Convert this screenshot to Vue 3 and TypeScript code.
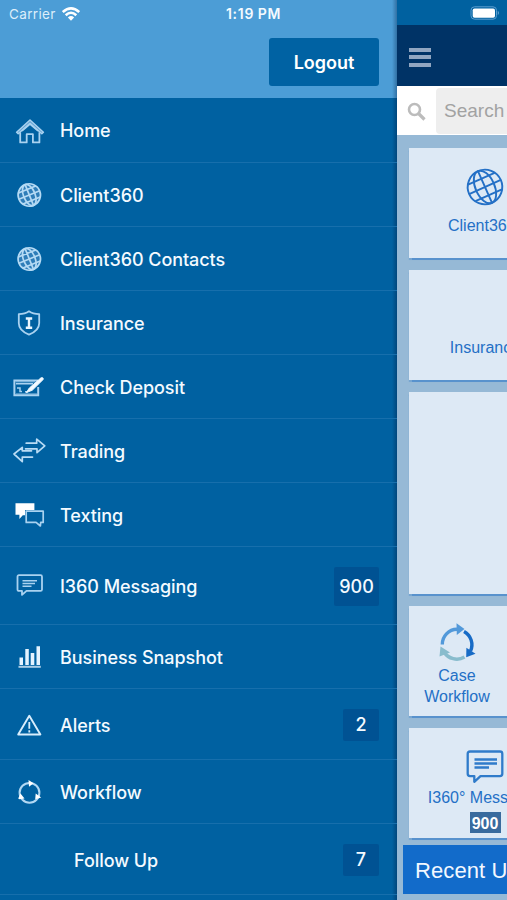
<script setup lang="ts">
interface MenuItem {
  label: string
  icon?: string
  badge?: string
  size?: string
}

const items: MenuItem[] = [
  { label: 'Home', icon: 'home', size: 'first' },
  { label: 'Client360', icon: 'globe' },
  { label: 'Client360 Contacts', icon: 'globe' },
  { label: 'Insurance', icon: 'shield' },
  { label: 'Check Deposit', icon: 'check' },
  { label: 'Trading', icon: 'trade' },
  { label: 'Texting', icon: 'chat' },
  { label: 'I360 Messaging', icon: 'message', badge: '900', size: 'tall' },
  { label: 'Business Snapshot', icon: 'bars' },
  { label: 'Alerts', icon: 'alert', badge: '2', size: 'medium' },
  { label: 'Workflow', icon: 'cycle' },
  { label: 'Follow Up', badge: '7', size: 'medium' },
]
</script>

<template>
  <div class="screen">
    <aside class="drawer">
      <header class="drawer-head">
        <div class="status">
          <span class="carrier">Carrier</span>
          <svg class="wifi" width="18" height="14" viewBox="0 0 18 14">
            <g fill="none" stroke="#fff" stroke-width="2.6">
              <path d="M0.8 5.1Q9-2.3 17.2 5.1" />
              <path d="M3.7 8.2Q9 3.3 14.3 8.2" />
            </g>
            <path d="M5.9 10.5Q9 7.7 12.1 10.5L9 13.7z" fill="#fff" />
          </svg>
          <span class="time">1:19 PM</span>
        </div>
        <button class="logout">Logout</button>
      </header>
      <nav>
        <div v-for="item in items" :key="item.label" class="row" :class="[item.size, { sub: !item.icon }]">
          <svg v-if="item.icon" class="icon" width="36" height="32" viewBox="0 0 36 32">
            <g v-if="item.icon === 'home'" fill="none" stroke="#a9d2f0" stroke-width="1.5" stroke-linejoin="round">
              <path d="M4.6 17.2L18 5l13.4 12.2-1.6 1.6L18 8.2 6.2 18.8z" fill="#5f9fd0" />
              <path d="M8.2 17.3V27.4h6.5v-8.2h6.2v8.2h6.5V17.3" stroke-width="1.8" />
              <path d="M10 16L18 9.2l8 6.8" />
            </g>
            <g v-else-if="item.icon === 'globe'" fill="none" stroke="#b4daf4" stroke-width="1.7" transform="rotate(-22 17.3 16)">
              <circle cx="17.3" cy="16" r="11.2" fill="#2e7db8" />
              <ellipse cx="17.3" cy="16" rx="5.8" ry="11.2" />
              <path d="M17.3 4.8v22.4M6.1 16h22.4M8 10h18.6M8 22h18.6" />
            </g>
            <g v-else-if="item.icon === 'shield'">
              <path d="M17 4.3C14 6.5 10.5 7.1 6.800 7.100v9.200c0 5.600 4.800 9.200 10.200 11.400 5.400-2.200 10.200-5.800 10.200-11.400V7.100C23.500 7.100 20 6.500 17 4.300z" fill="none" stroke="#a9d2f0" stroke-width="1.8" stroke-linejoin="round" />
              <path d="M13.8 11.5h6.400M13.800 20.700h6.400M17 11.500v9.200" fill="none" stroke="#eaf6ff" stroke-width="2.4" />
            </g>
            <g v-else-if="item.icon === 'check'" fill="none" stroke="#a9d2f0">
              <path d="M26 9.500H2.400v14.800h23.800V16" stroke-width="2" />
              <path d="M4 12.800h17M13 20.700h3" stroke-width="1.5" />
              <path d="M4 10.800h19M4 22.800h21" stroke-width="1.2" opacity=".6" />
              <path d="M5 17h3v3.500h2" stroke-width="1.5" />
              <path d="M14.300 21.600l3-4.600L29 6.800q2.300-.8 2.400 1.500L20.200 19.300z" fill="#f3faff" stroke="#f3faff" stroke-width=".9" />
            </g>
            <g v-else-if="item.icon === 'trade'" fill="none" stroke="#b9dcf5" stroke-width="1.7" stroke-linejoin="round" stroke-linecap="round">
              <path d="M14.200 8.200h10.500V4.200L32.800 10.800l-7.800 6.800v-3.800H13.500" />
              <path d="M19.500 15.800h-9.200v-3.500L2 19l8.300 7.600v-4.500h10.200" />
            </g>
            <g v-else-if="item.icon === 'chat'">
              <path d="M3.500 4.200h18.900v6.800H13v5.200h-2.200L7.400 20v-4.300H3.500z" fill="#fff" />
              <path d="M14.200 12.200h17v11.200h-2.500l-.3 3.600-4.300-3.600h-9.900z" fill="none" stroke="#a9d2f0" stroke-width="1.7" stroke-linejoin="round" />
            </g>
            <g v-else-if="item.icon === 'message'" fill="none" stroke="#a9d2f0" stroke-width="1.8" stroke-linejoin="round">
              <path d="M7 5.200h21.500q1.500 0 1.500 1.500v12.700q0 1.500-1.500 1.500H14.500l-4.500 4v-4H7q-1.500 0-1.500-1.500V6.700q0-1.500 1.500-1.500z" />
              <path d="M10.500 10.700h14.500M10.500 13.500h12.500M10.500 16.200h9" stroke-width="1.5" />
            </g>
            <g v-else-if="item.icon === 'bars'" fill="#e4f3ff">
              <path d="M7.500 16.500H11V24H7.500zM13.300 8h3.500v16h-3.500zM18.700 12h3.600v12h-3.600zM24.500 5.300H28V24h-3.500z" />
              <path d="M6.500 24.800h22.300v2H6.500z" opacity=".75" />
            </g>
            <g v-else-if="item.icon === 'alert'" fill="none" stroke="#d8edfc">
              <path d="M17.300 6.800L28.400 25.500H6.200z" stroke-width="1.9" stroke-linejoin="round" />
              <path d="M17.300 13v6.800M17.300 21.300v2.200" stroke-width="1.8" />
            </g>
            <g v-else>
              <circle cx="17.500" cy="16.800" r="9.900" fill="none" stroke="#b2d8f3" stroke-width="2" />
              <path d="M16.500 4l5 3.200-4.500 3.600zM6.200 22.400l2.300-4.800 4 4.800-5 .8zM29.200 21.500l-6 1.700.5-5.600z" fill="#fff" />
            </g>
          </svg>
          <span class="label">{{ item.label }}</span>
          <span v-if="item.badge" class="badge">{{ item.badge }}</span>
        </div>
      </nav>
    </aside>

    <main class="page">
      <div class="page-status">
        <svg width="30" height="14" viewBox="0 0 30 14">
          <rect x="1" y=".8" width="25.5" height="12.4" rx="3.5" fill="none" stroke="#5a9dcf" />
          <rect x="2.7" y="2.5" width="22.3" height="9.2" rx="1.8" fill="#fff" />
          <path d="M27.8 4.8q2 2.2 0 4.4z" fill="#78afd8" />
        </svg>
      </div>
      <div class="toolbar"><i /><i /><i /></div>
      <div class="search">
        <svg width="20" height="20" viewBox="0 0 20 20" fill="none" stroke="#bcbcbc">
          <circle cx="7.5" cy="7.5" r="5.5" stroke-width="2.6" />
          <path d="M11.5 11.5l6 6" stroke-width="3.2" />
        </svg>
        <span class="field">Search</span>
      </div>
      <section class="tiles">
        <div class="tile">
          <svg class="globe" width="40" height="40" viewBox="0 0 40 40" fill="none" stroke="#2470c6" stroke-width="1.9">
            <g transform="rotate(-24 20 20)">
              <circle cx="20" cy="20" r="17.3" />
              <ellipse cx="20" cy="20" rx="9.5" ry="17.3" />
              <path d="M20 2.7v34.6M2.7 20h34.6M5.5 11h29M5.5 29h29" />
            </g>
          </svg>
          <span class="name">Client360°</span>
        </div>
        <div class="tile insurance"><span class="name">Insurance</span></div>
        <div class="tile blank"></div>
        <div class="tile narrow">
          <svg class="cycle" width="40" height="40" viewBox="0 0 40 40">
            <g fill="none" stroke-width="3.4">
              <path d="M5.3 21.5A15 15 0 0 1 20 6.2" stroke="#5299da" />
              <path d="M27 8.5A15 15 0 0 1 33.5 28" stroke="#176bc6" />
              <path d="M27.5 34A15 15 0 0 1 7 29" stroke="#88bccd" />
            </g>
            <path d="M19.5.3L27.5 6l-7.700 6z" fill="#5299da" />
            <path d="M38.5 30.800l-9.300 3.400.2-9.500z" fill="#176bc6" />
            <path d="M2.500 33.500l1-10 9.500 6z" fill="#88bccd" />
          </svg>
          <span class="name">Case<br />Workflow</span>
        </div>
        <div class="tile messages">
          <svg class="bubble" width="38" height="34" viewBox="0 0 38 34" fill="none" stroke="#2f7bca" stroke-width="2.3">
            <path d="M4 1.5h30q2.3 0 2.3 2.3v20q0 2.3-2.3 2.3H14.5L8.3 31.8v-5.7H4q-2.3 0-2.3-2.3v-20Q1.7 1.5 4 1.5z" stroke-linejoin="round" />
            <path d="M8.500 9.500H31M8.500 13.500H31M8.500 17.500h14.500" />
          </svg>
          <span class="name">I360° Messaging</span>
          <span class="count">900</span>
        </div>
      </section>
      <div class="recent">Recent Updates</div>
    </main>
  </div>
</template>

<style>
body {
  overflow: hidden;
}
</style>

<style scoped>
.screen {
  display: flex;
  width: 507px;
  height: 900px;
  overflow: hidden;
  background: #0061a1;
  font-family: Inter, "Liberation Sans", sans-serif;
}
.drawer {
  flex: 0 0 397px;
  height: 900px;
  overflow: hidden;
  background: linear-gradient(90deg, transparent 392px, rgba(0, 30, 70, .4) 397px), #0061a1;
  color: #f4faff;
}
.drawer-head {
  box-sizing: border-box;
  height: 98px;
  display: flex;
  flex-direction: column;
  background: linear-gradient(90deg, transparent 392px, rgba(0, 30, 70, .35) 397px), #4c9dd6;
}
.status {
  display: flex;
  align-items: center;
  flex: 0 0 38px;
  box-sizing: border-box;
  padding: 0 0 11px 9px;
}
.carrier {
  width: 53px;
  color: #dceefa;
  font-size: 13.5px;
  letter-spacing: .35px;
}
.time {
  margin-left: 146px;
  font-size: 14px;
  font-weight: 600;
  letter-spacing: .7px;
  word-spacing: -.5px;
  white-space: nowrap;
}
.logout {
  align-self: flex-end;
  width: 110px;
  height: 48px;
  margin-right: 18px;
  padding: 0;
  border: 0;
  border-radius: 3px;
  background: #0062a3;
  color: #fff;
  font: 600 18px Inter, sans-serif;
}
.row {
  box-sizing: border-box;
  height: 64px;
  display: flex;
  align-items: center;
  padding: 1px 18px 0 12px;
  border-bottom: 1px solid #176fac;
}
.row.first {
  height: 65px;
}
.row.tall {
  height: 78px;
}
.row.medium {
  height: 71px;
  padding-top: 2px;
}
.row.sub {
  padding-left: 74px;
}
.icon {
  flex: none;
  margin-right: 12px;
}
.label {
  flex: 1;
  font-size: 18px;
  font-weight: 500;
  letter-spacing: -.06px;
  white-space: nowrap;
}
.badge {
  width: 36px;
  height: 32px;
  border-radius: 2px;
  background: #005293;
  font-size: 18px;
  font-weight: 500;
  line-height: 32px;
  text-align: center;
}
.tall .badge {
  width: 45px;
  height: 39px;
  line-height: 39px;
}
.page {
  flex: 0 0 110px;
  height: 900px;
  overflow: hidden;
  background: #96b9d6;
  font-family: "Liberation Sans", Arial, sans-serif;
}
.page-status {
  height: 25px;
  box-sizing: border-box;
  padding: 6px 0 0 73px;
  background: #0061a0;
}
.page-status svg,
.tile svg {
  display: block;
}
.toolbar {
  height: 61px;
  box-sizing: border-box;
  display: flex;
  flex-direction: column;
  gap: 3px;
  padding: 23px 0 0 12px;
  background: #003366;
}
.toolbar i {
  width: 22px;
  height: 4px;
  margin-bottom: .4px;
  background: #91a6c1;
}
.search {
  height: 49px;
  display: flex;
  align-items: center;
  background: #fff;
}
.search svg {
  flex: none;
  margin: 3px 9px 0 10px;
}
.field {
  width: 100px;
  flex: none;
  height: 46px;
  box-sizing: border-box;
  padding-left: 8px;
  border-radius: 4px;
  background: #eee;
  color: #a2a2a2;
  font-size: 19px;
  line-height: 46px;
}
.tiles {
  display: flex;
  flex-direction: column;
  gap: 12px;
  padding: 13px 0 0 12px;
}
.tile {
  flex: none;
  width: 152px;
  height: 110px;
  box-sizing: border-box;
  display: flex;
  flex-direction: column;
  align-items: center;
  background: #dde9f5;
  box-shadow: 0 1.5px 1px #5892cd;
  color: #2470c6;
  font-size: 16px;
  line-height: 21px;
  text-align: center;
}
.name {
  white-space: nowrap;
}
.globe {
  margin: 19px 0 8px;
}
.insurance {
  padding-top: 67px;
}
.blank {
  height: 202px;
}
.narrow {
  width: 100px;
  padding-right: 4px;
}
.cycle {
  margin: 17px 0 2px;
}
.bubble {
  margin: 22px 0 4px;
}
.messages .name {
  margin-left: 5px;
  font-size: 16px;
  line-height: 20px;
}
.count {
  width: 31px;
  height: 21px;
  margin-top: 4px;
  background: #396b9e;
  color: #fff;
  font-weight: 700;
  line-height: 23px;
}
.recent {
  height: 49px;
  margin: 7px 0 0 6px;
  padding-left: 12px;
  background: #126bca;
  color: #f2f8ff;
  font-size: 22px;
  letter-spacing: .1px;
  line-height: 51px;
  white-space: nowrap;
}
</style>
